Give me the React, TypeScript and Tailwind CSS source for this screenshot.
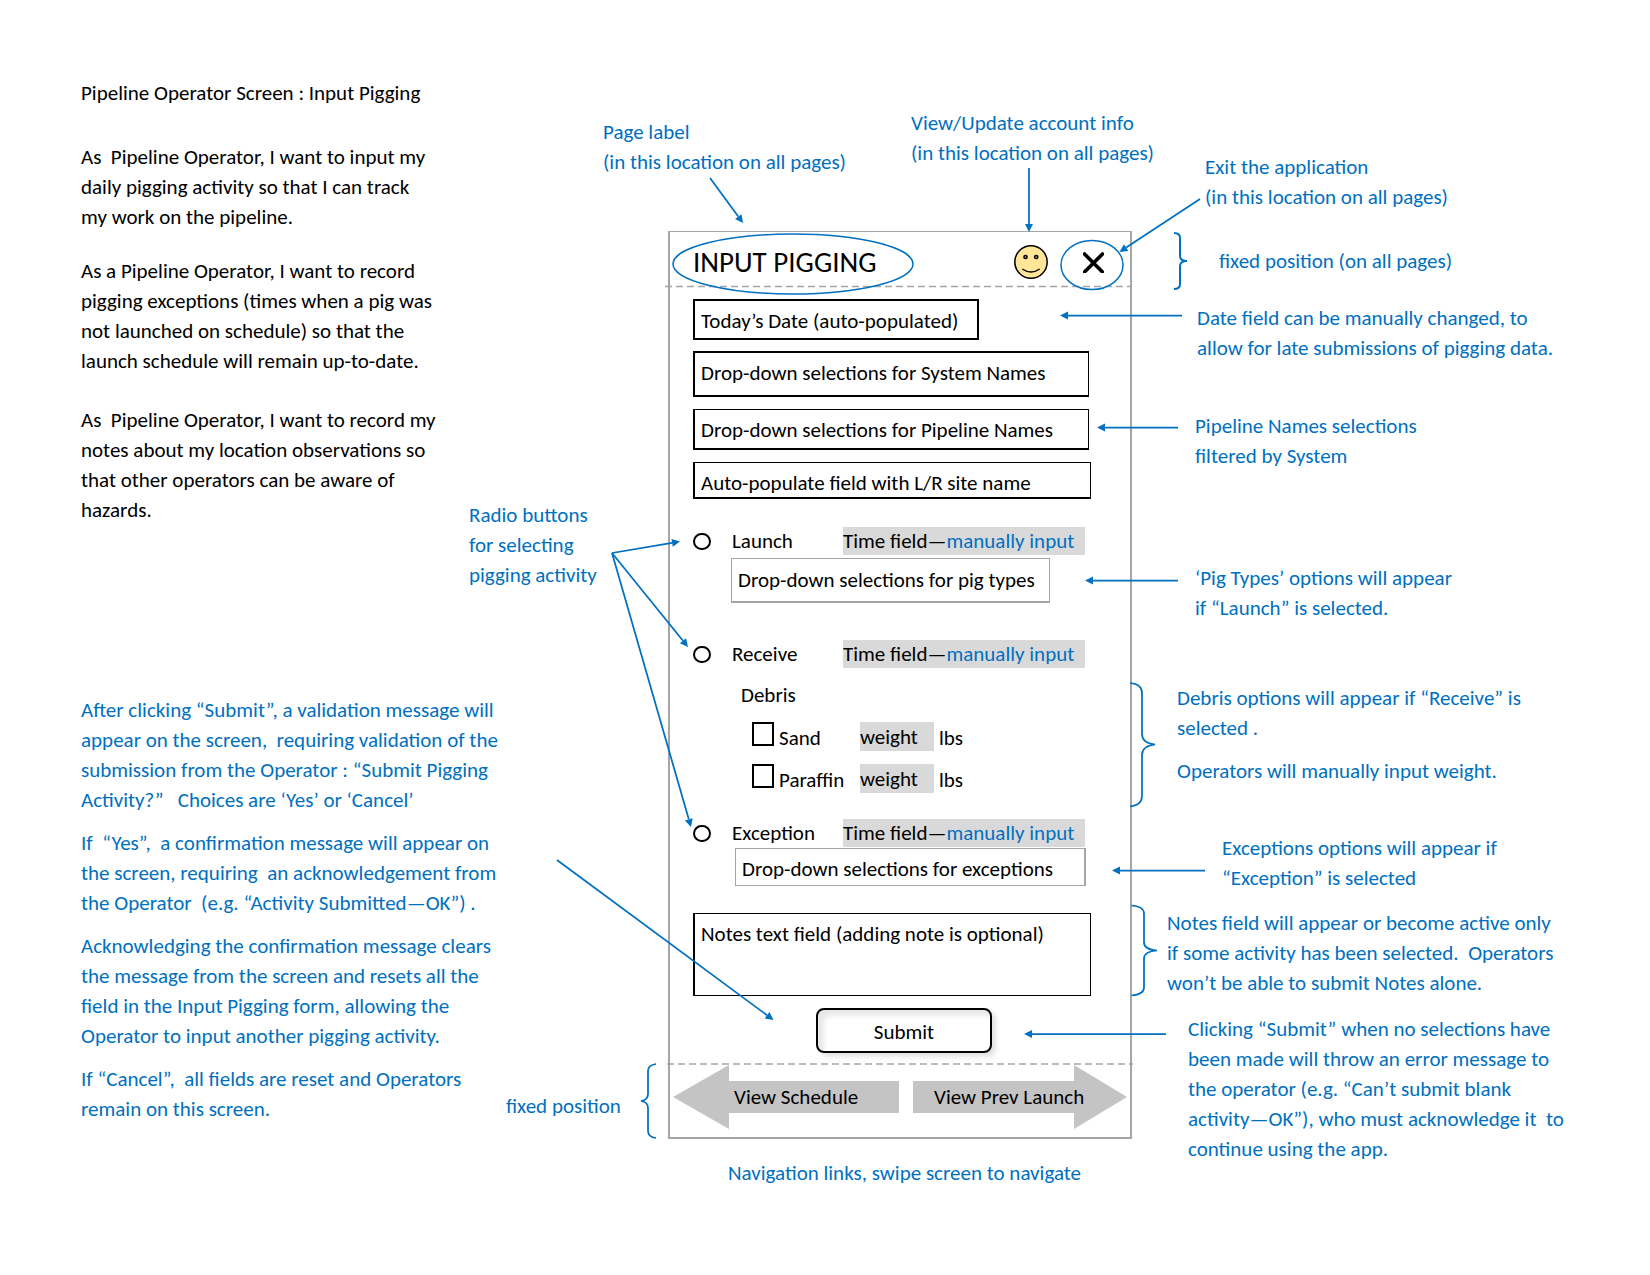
import type { ReactNode } from "react";

const BLUE = "#0070c0";

function Note({ children, className = "" }: { children: ReactNode; className?: string }) {
  return <p className={`whitespace-pre text-[#0070c0] ${className}`}>{children}</p>;
}

function Arrow({ from, to }: { from: [number, number]; to: [number, number] }) {
  const length = Math.hypot(to[0] - from[0], to[1] - from[1]);
  const ux = (to[0] - from[0]) / length;
  const uy = (to[1] - from[1]) / length;
  const bx = to[0] - ux * 8;
  const by = to[1] - uy * 8;
  const head = [
    `${to[0]},${to[1]}`,
    `${bx - uy * 4},${by + ux * 4}`,
    `${bx + uy * 4},${by - ux * 4}`,
  ].join(" ");
  return (
    <>
      <line x1={from[0]} y1={from[1]} x2={bx} y2={by} />
      <polygon points={head} fill={BLUE} stroke="none" />
    </>
  );
}

/* Arrows, braces and rings that tie the notes to the parts of the screen. */
function Callouts() {
  return (
    <svg
      viewBox="668 231 464 908"
      className="pointer-events-none absolute inset-0 h-full w-full overflow-visible"
      fill="none"
      stroke={BLUE}
      strokeWidth="1.75"
      aria-hidden="true"
    >
      <g stroke="#a5a5a5" strokeWidth="1.5" strokeDasharray="7 4">
        <line x1="665" y1="286.5" x2="1131" y2="286.5" />
        <line x1="667" y1="1064" x2="1133" y2="1064" />
      </g>
      <ellipse cx="793" cy="264" rx="120" ry="30" strokeWidth="1.5" />
      <ellipse cx="1092" cy="265" rx="31" ry="24.5" strokeWidth="1.5" />
      <Arrow from={[710, 178]} to={[743, 223]} />
      <Arrow from={[1029, 168]} to={[1029, 232]} />
      <Arrow from={[1200, 199]} to={[1119.5, 252]} />
      <Arrow from={[1182, 315.5]} to={[1060, 315.5]} />
      <Arrow from={[1178, 427.5]} to={[1097, 427.5]} />
      <Arrow from={[1178, 580.5]} to={[1085, 580.5]} />
      <Arrow from={[1205, 870.5]} to={[1112, 870.5]} />
      <Arrow from={[1166, 1034]} to={[1024, 1034]} />
      <Arrow from={[612, 553]} to={[680, 541.5]} />
      <Arrow from={[612, 553]} to={[688, 647]} />
      <Arrow from={[612, 553]} to={[691, 827]} />
      <Arrow from={[557, 860]} to={[773.5, 1020]} />
      <path strokeWidth="2" d="M1174 233q6 0 6 5v18q0 5 7 5q-7 0-7 5v18q0 5-6 5" />
      <path d="M1130 683q12 1 12 10v41q0 9 13 10.500q-13 1.500-13 10.500v41q0 9-12 10.500" />
      <path d="M1131.500 905.500q12.500 1 12.500 8v29q0 7 13 8q-13 1-13 8v29q0 7-12.500 8" />
      <path d="M656 1064q-8 1-8 7v23q0 6-7 7q7 1 7 7v23q0 6 8 7" />
    </svg>
  );
}

function Activity({ id, label }: { id: string; label: string }) {
  return (
    <div className="flex h-[30px] items-center">
      <input
        type="radio"
        name="activity"
        id={id}
        className="h-[17px] w-[18px] shrink-0 appearance-none rounded-full border-2 border-black checked:bg-black"
      />
      <label htmlFor={id} className="w-[132px] pl-[21px]">
        {label}
      </label>
      <div className="flex h-[28px] w-[242px] items-center bg-[#d9d9d9]">
        <label htmlFor={`${id}-time`}>Time field—</label>
        <input
          id={`${id}-time`}
          placeholder="manually input"
          className="min-w-0 flex-1 bg-transparent text-[#0070c0] placeholder:text-[#0070c0]"
        />
      </div>
    </div>
  );
}

function Debris({ id, label }: { id: string; label: string }) {
  return (
    <div className="flex h-[30px] items-start pl-[59px]">
      <input
        type="checkbox"
        id={id}
        className="h-[24px] w-[22px] shrink-0 appearance-none border-2 border-black checked:bg-black"
      />
      <label htmlFor={id} className="w-[86px] pt-px pl-[5px]">
        {label}
      </label>
      <input
        id={`${id}-weight`}
        defaultValue="weight"
        className="h-[29px] w-[74px] bg-[#d9d9d9]"
      />
      <label htmlFor={`${id}-weight`} className="pt-px pl-[5px]">
        lbs
      </label>
    </div>
  );
}

function Picker({ text, className }: { text: string; className: string }) {
  return (
    <select aria-label={text} className={`block appearance-none bg-white pl-[6px] ${className}`}>
      <option>{text}</option>
    </select>
  );
}

function Phone() {
  return (
    <form
      className="border-2 border-t border-[#a5a5a5]"
      onSubmit={(event) => event.preventDefault()}
    >
      <header className="flex h-[55px] items-center pt-[5px] pr-[26px] pl-[23px]">
        <h1 className="text-[29px]">INPUT PIGGING</h1>
        <button type="button" aria-label="Account" className="ml-auto">
          <svg viewBox="0 0 34 34" className="size-[34px]" fill="none" stroke="#000" strokeWidth="1.5">
            <circle cx="17" cy="17" r="16.200" fill="#ffe699" />
            <circle cx="11.500" cy="12" r="1.600" fill="#cdb87a" />
            <circle cx="22.200" cy="12" r="1.600" fill="#cdb87a" />
            <path d="M8.300 24q8.700 6 17.400 0" />
          </svg>
        </button>
        <button type="button" aria-label="Exit" className="ml-[35px]">
          <svg viewBox="0 0 21 21" className="size-[21px]" stroke="#000" strokeWidth="3.600" strokeLinecap="round">
            <path d="M1.500 2l18 18M19.500 2l-18 18" />
          </svg>
        </button>
      </header>

      <div className="pt-3 pr-[37px] pl-[23px]">
        <input
          aria-label="Date"
          defaultValue="Today’s Date (auto-populated)"
          className="block h-[41px] w-[286px] border-2 border-black pt-[2px] pl-[6px]"
        />
        <Picker
          text="Drop-down selections for System Names"
          className="mt-[11px] h-[46px] w-[396px] border-2 border-r border-black pb-[2px]"
        />
        <Picker
          text="Drop-down selections for Pipeline Names"
          className="mt-3 h-[41px] w-[396px] border border-b-2 border-l-2 border-black pt-[2px]"
        />
        <input
          aria-label="Site name"
          readOnly
          value="Auto-populate field with L/R site name"
          className="mt-3 block h-[37px] w-[398px] border border-b-2 border-l-2 border-black pt-[5px] pl-[6px]"
        />

        <div className="mt-[27px]">
          <Activity id="launch" label="Launch" />
          <Picker
            text="Drop-down selections for pig types"
            className="mt-[2px] ml-[38px] h-[45px] w-[319px] border border-b-2 border-[#a5a5a5]"
          />
        </div>

        <div className="mt-9">
          <Activity id="receive" label="Receive" />
          <p className="mt-[11px] pl-12">Debris</p>
          <div className="mt-3 flex flex-col gap-3">
            <Debris id="sand" label="Sand" />
            <Debris id="paraffin" label="Paraffin" />
          </div>
        </div>

        <div className="mt-6">
          <Activity id="exception" label="Exception" />
          <Picker
            text="Drop-down selections for exceptions"
            className="ml-[42px] h-[38px] w-[351px] border border-r-2 border-[#a5a5a5] pt-[3px]"
          />
        </div>

        <textarea
          aria-label="Notes"
          defaultValue="Notes text field (adding note is optional)"
          className="mt-[27px] block h-[83px] w-[398px] resize-none border border-l-2 border-black pt-[5px] pl-[6px]"
        />
        <button
          type="submit"
          className="mt-3 ml-[123px] block h-[45px] w-[176px] rounded-lg border-2 border-black bg-white pt-[2px] shadow-[4px_4px_5px_rgba(0,0,0,0.12),inset_6px_6px_5px_rgba(0,0,0,0.09)]"
        >
          Submit
        </button>
      </div>

      <nav className="mt-3 flex justify-between pr-[3px] pb-2 pl-[3px]">
        <a href="#schedule" className="relative flex h-[64px] w-[226px] items-center pl-[61px]">
          <svg viewBox="0 0 226 64" className="absolute inset-0" fill="#c4c4c4" aria-hidden="true">
            <path d="M0 32L56 0V16H226V48H56V64Z" />
          </svg>
          <span className="relative">View Schedule</span>
        </a>
        <a href="#launch" className="relative flex h-[64px] w-[214px] items-center pl-[21px]">
          <svg viewBox="0 0 214 64" className="absolute inset-0" fill="#c4c4c4" aria-hidden="true">
            <path d="M214 32L161 0V16H0V48H161V64Z" />
          </svg>
          <span className="relative">View Prev Launch</span>
        </a>
      </nav>
    </form>
  );
}

export default function App() {
  return (
    <main className="grid min-h-screen grid-cols-[minmax(0,668fr)_464px_minmax(0,518fr)] bg-white font-['Carlito','Lato',sans-serif] text-[21px] leading-[30px] text-black">
      <section className="flex justify-between pl-[81px]">
        <div className="whitespace-pre">
          <h2 className="pt-[78px]">Pipeline Operator Screen : Input Pigging</h2>
          <p className="mt-[34px]">
            {"As  Pipeline Operator, I want to input my\ndaily pigging activity so that I can track\nmy work on the pipeline."}
          </p>
          <p className="mt-6">
            {"As a Pipeline Operator, I want to record\npigging exceptions (times when a pig was\nnot launched on schedule) so that the\nlaunch schedule will remain up-to-date."}
          </p>
          <p className="mt-[29px]">
            {"As  Pipeline Operator, I want to record my\nnotes about my location observations so\nthat other operators can be aware of\nhazards."}
          </p>
          <div className="mt-[170px] flex flex-col gap-[13px]">
            <Note>
              {"After clicking “Submit”, a validation message will\nappear on the screen,  requiring validation of the\nsubmission from the Operator : “Submit Pigging\nActivity?”   Choices are ‘Yes’ or ‘Cancel’"}
            </Note>
            <Note>
              {"If  “Yes”,  a confirmation message will appear on\nthe screen, requiring  an acknowledgement from\nthe Operator  (e.g. “Activity Submitted—OK”) ."}
            </Note>
            <Note>
              {"Acknowledging the confirmation message clears\nthe message from the screen and resets all the\nfield in the Input Pigging form, allowing the\nOperator to input another pigging activity."}
            </Note>
            <Note>{"If “Cancel”,  all fields are reset and Operators\nremain on this screen."}</Note>
          </div>
        </div>
        <div className="w-[162px] shrink-0">
          <Note className="mt-[500px] -ml-[37px]">{"Radio buttons\nfor selecting\npigging activity"}</Note>
          <Note className="mt-[501px]">fixed position</Note>
        </div>
      </section>

      <section className="pt-[108px]">
        <div className="-ml-[65px] flex items-start gap-[66px]">
          <Note className="w-[242px] shrink-0 pt-[9px]">{"Page label\n(in this location on all pages)"}</Note>
          <Note>{"View/Update account info\n(in this location on all pages)"}</Note>
        </div>
        <div className="relative mt-[54px]">
          <Phone />
          <Callouts />
        </div>
        <Note className="mt-[19px] pl-[60px]">Navigation links, swipe screen to navigate</Note>
      </section>

      <section className="pt-[152px] pl-[35px]">
        <Note className="pl-[38px]">{"Exit the application\n(in this location on all pages)"}</Note>
        <Note className="mt-[34px] pl-[52px]">fixed position (on all pages)</Note>
        <Note className="mt-[27px] pl-[30px]">
          {"Date field can be manually changed, to\nallow for late submissions of pigging data."}
        </Note>
        <Note className="mt-12 pl-7">{"Pipeline Names selections\nfiltered by System"}</Note>
        <Note className="mt-[92px] pl-7">{"‘Pig Types’ options will appear\nif “Launch” is selected."}</Note>
        <Note className="mt-[60px] pl-[10px]">{"Debris options will appear if “Receive” is\nselected ."}</Note>
        <Note className="mt-[13px] pl-[10px]">Operators will manually input weight.</Note>
        <Note className="mt-[47px] pl-[55px]">{"Exceptions options will appear if\n“Exception” is selected"}</Note>
        <Note className="mt-[15px]">
          {"Notes field will appear or become active only\nif some activity has been selected.  Operators\nwon’t be able to submit Notes alone."}
        </Note>
        <Note className="mt-4 pl-[21px]">
          {"Clicking “Submit” when no selections have\nbeen made will throw an error message to\nthe operator (e.g. “Can’t submit blank\nactivity—OK”), who must acknowledge it  to\ncontinue using the app."}
        </Note>
      </section>
    </main>
  );
}
